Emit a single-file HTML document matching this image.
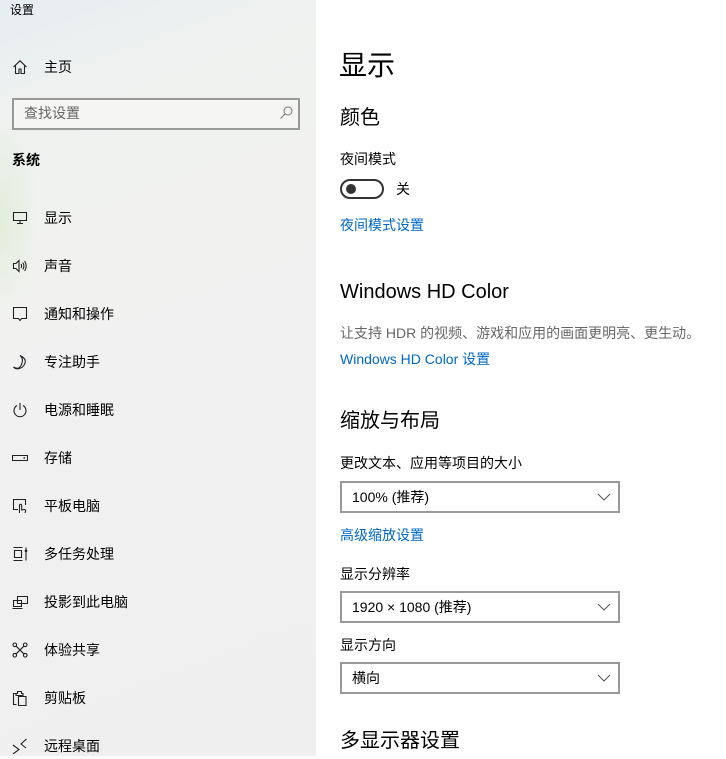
<!DOCTYPE html>
<html><head><meta charset="utf-8"><style>
*{margin:0;padding:0;box-sizing:border-box}
body{width:726px;height:756px;overflow:hidden;position:relative;background:#fff;font-family:"Liberation Sans","Noto Sans CJK SC",sans-serif;color:#000}
#side{position:absolute;left:0;top:0;width:316px;height:756px;background:linear-gradient(160deg,#e6edf2 0%,#eef1ef 12%,#f1f2f0 30%,#f0f0f0 60%,#efefef 100%)}
#side:before{content:"";position:absolute;left:0;top:120px;width:40px;height:200px;background:radial-gradient(ellipse at left,rgba(220,235,210,.7),rgba(240,240,240,0) 70%)}
.a{position:absolute;white-space:nowrap;line-height:20px}
.t14{font-size:14px}
.ic{position:absolute;left:12px;width:16px;height:16px}
.ic svg{width:16px;height:16px;fill:none;stroke:#222;stroke-width:1.1}
.lnk{color:#0067c0;font-size:14px}
.dd{position:absolute;left:340px;width:280px;height:32px;border:2px solid #999;background:#fff}
.dd span{position:absolute;left:10px;top:4px;font-size:14px;line-height:20px}
.dd svg{position:absolute;right:6px;top:8px;width:16px;height:12px;fill:none;stroke:#555;stroke-width:1}
h2{font-weight:normal;font-size:20px;position:absolute;line-height:28px;white-space:nowrap}
</style></head><body>
<div id="side">
<div class="a" style="left:10px;top:0;font-size:12px">设置</div>
<div class="ic" style="top:59px"><svg viewBox="0 0 16 16"><path d="M1.5 8L8 1.8 14.5 8M3.5 6.2V14.5h3.5V10h2v4.5h3.5V6.2"/></svg></div>
<div class="a t14" style="left:44px;top:57px">主页</div>
<div style="position:absolute;left:12px;top:98px;width:288px;height:32px;border:2px solid #999;background:#f5f5f4"></div>
<div class="a t14" style="left:24px;top:103px;color:#666">查找设置</div>
<svg style="position:absolute;left:278px;top:105px;width:16px;height:16px" viewBox="0 0 16 16" fill="none" stroke="#777" stroke-width="1"><circle cx="10" cy="6" r="4"/><path d="M7 9L2.5 13.5"/></svg>
<div class="a t14" style="left:12px;top:150px;font-weight:bold">系统</div>

<div class="ic" style="top:210px"><svg viewBox="0 0 16 16"><path d="M1.5 2.5h13v8h-13zM8 10.5v3M5 13.5h6"/></svg></div>
<div class="a t14" style="left:44px;top:208px">显示</div>
<div class="ic" style="top:258px"><svg viewBox="0 0 16 16"><path d="M1.5 5.5h2.5l3-3v11l-3-3H1.5zM9 6q1.2 2 0 4M10.8 4.5q2.2 3.5 0 7M12.6 3q3.2 5 0 10"/></svg></div>
<div class="a t14" style="left:44px;top:256px">声音</div>
<div class="ic" style="top:306px"><svg viewBox="0 0 16 16"><path d="M1.5 1.5h13v11h-5L8 14.5 6.5 12.5h-5z"/></svg></div>
<div class="a t14" style="left:44px;top:304px">通知和操作</div>
<div class="ic" style="top:354px"><svg viewBox="0 0 16 16"><path d="M8 1.5q4 3 1.5 9T1.5 13q2 2.5 6 1.5T13 9 8 1.5z"/></svg></div>
<div class="a t14" style="left:44px;top:352px">专注助手</div>
<div class="ic" style="top:402px"><svg viewBox="0 0 16 16"><path d="M8 1v7M5 3.5a6 6 0 1 0 6 0"/></svg></div>
<div class="a t14" style="left:44px;top:400px">电源和睡眠</div>
<div class="ic" style="top:450px"><svg viewBox="0 0 16 16"><path d="M0.5 5.5h15v5H0.5z"/><path d="M11.5 8h1.5" stroke-width="1.5"/></svg></div>
<div class="a t14" style="left:44px;top:448px">存储</div>
<div class="ic" style="top:498px"><svg viewBox="0 0 16 16"><path d="M6 11.5H1.5v-10h12V7M7.5 15V7.5q0-1.2 1.1-1.2T9.7 7.5v4.5l3-.5q1.3.5.8 2L13 15"/></svg></div>
<div class="a t14" style="left:44px;top:496px">平板电脑</div>
<div class="ic" style="top:546px"><svg viewBox="0 0 16 16"><path d="M1.5 1.5h9M1.5 14.5h9M2.5 4.5h7v7h-7zM14 1.5v2M14 6v8.5"/><circle cx="14" cy="4.8" r="0.8" fill="#222"/></svg></div>
<div class="a t14" style="left:44px;top:544px">多任务处理</div>
<div class="ic" style="top:594px"><svg viewBox="0 0 16 16"><path d="M5.5 2.5h10v7h-10zM1.5 6.5h8v6h-8zM0.5 14.5h10"/></svg></div>
<div class="a t14" style="left:44px;top:592px">投影到此电脑</div>
<div class="ic" style="top:642px"><svg viewBox="0 0 16 16"><circle cx="2.8" cy="2.8" r="1.8"/><circle cx="13.2" cy="2.8" r="1.8"/><circle cx="2.8" cy="13.2" r="1.8"/><circle cx="13.2" cy="13.2" r="1.8"/><path d="M4.2 4.2l7.6 7.6M11.8 4.2l-7.6 7.6"/></svg></div>
<div class="a t14" style="left:44px;top:640px">体验共享</div>
<div class="ic" style="top:690px"><svg viewBox="0 0 16 16"><path d="M4.5 3.5h-3v11h3M5.5 1.5h4v2h1.5v2h-7v-2h1.5zM6.5 6.5h7.5v9H6.5z"/></svg></div>
<div class="a t14" style="left:44px;top:688px">剪贴板</div>
<div class="ic" style="top:738px"><svg viewBox="0 0 16 16"><path d="M1 7l6 4.5-6 4.5M14.5 1L9 6l5 4"/></svg></div>
<div class="a t14" style="left:44px;top:736px">远程桌面</div>
</div>

<div class="a" style="left:339px;top:48px;font-size:28px;line-height:36px">显示</div>
<h2 style="left:340px;top:104px">颜色</h2>
<div class="a t14" style="left:340px;top:149px">夜间模式</div>
<div style="position:absolute;left:340px;top:179px;width:44px;height:20px;border:2px solid #333;border-radius:10px"></div>
<div style="position:absolute;left:346px;top:184px;width:10px;height:10px;border-radius:5px;background:#333"></div>
<div class="a t14" style="left:396px;top:179px">关</div>
<div class="a lnk" style="left:340px;top:215px">夜间模式设置</div>
<h2 style="left:340px;top:278px">Windows HD Color</h2>
<div class="a t14" style="left:340px;top:323px;color:#666">让支持 HDR 的视频、游戏和应用的画面更明亮、更生动。</div>
<div class="a lnk" style="left:340px;top:349px">Windows HD Color 设置</div>
<h2 style="left:340px;top:407px">缩放与布局</h2>
<div class="a t14" style="left:340px;top:453px">更改文本、应用等项目的大小</div>
<div class="dd" style="top:481px"><span>100% (推荐)</span><svg viewBox="0 0 16 12"><path d="M2 3l6 6 6-6"/></svg></div>
<div class="a lnk" style="left:340px;top:525px">高级缩放设置</div>
<div class="a t14" style="left:340px;top:564px">显示分辨率</div>
<div class="dd" style="top:591px"><span>1920 × 1080 (推荐)</span><svg viewBox="0 0 16 12"><path d="M2 3l6 6 6-6"/></svg></div>
<div class="a t14" style="left:340px;top:635px">显示方向</div>
<div class="dd" style="top:662px"><span>横向</span><svg viewBox="0 0 16 12"><path d="M2 3l6 6 6-6"/></svg></div>
<h2 style="left:340px;top:727px">多显示器设置</h2>
</body></html>
